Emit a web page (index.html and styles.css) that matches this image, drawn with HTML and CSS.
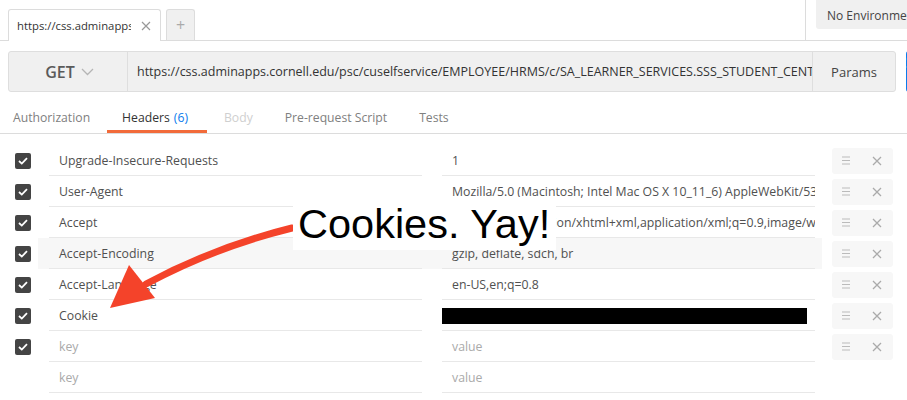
FILE: index.html
```html
<!DOCTYPE html>
<html>
<head>
<meta charset="utf-8">
<link rel="stylesheet" href="styles.css">
</head>
<body>
<div class="page">
  <div class="topbar">
    <div class="tabs">
      <div class="tab active">
        <span class="tab-title">https://css.adminapps.cornell.edu/psc</span>
        <svg class="tab-close" width="10" height="10" viewBox="0 0 10 10"><path d="M1 1L9 9M9 1L1 9" stroke="#999" stroke-width="1.2"/></svg>
      </div>
      <div class="tab plus">+</div>
    </div>
    <div class="env-area">
      <div class="env">No Environment</div>
    </div>
  </div>

  <div class="request">
    <div class="urlbar">
      <div class="method">GET <svg width="13" height="8" viewBox="0 0 13 8"><path d="M1 1L6.5 6.5L12 1" fill="none" stroke="#b5b5b5" stroke-width="1.3"/></svg></div>
      <div class="url">https://css.adminapps.cornell.edu/psc/cuselfservice/EMPLOYEE/HRMS/c/SA_LEARNER_SERVICES.SSS_STUDENT_CENTER.GBL</div>
      <div class="params">Params</div>
    </div>
    <div class="send">Send</div>
  </div>

  <div class="subtabs">
    <div class="subtab first">Authorization</div>
    <div class="subtab current">Headers <span class="count">(6)</span></div>
    <div class="subtab disabled">Body</div>
    <div class="subtab">Pre-request Script</div>
    <div class="subtab">Tests</div>
  </div>

  <div class="headers">
    <div class="row">
      <span class="check"><svg width="10" height="8" viewBox="0 0 10 8"><path d="M1 4L3.8 6.6L9 1.2" fill="none" stroke="#fff" stroke-width="1.8"/></svg></span>
      <div class="main"><div class="cell">Upgrade-Insecure-Requests</div><div class="cell">1</div></div>
      <div class="actions"><svg width="8" height="9" viewBox="0 0 8 9"><path d="M0 1H8M0 4.5H8M0 8H8" stroke="#bbb" stroke-width="1"/></svg><svg width="10" height="10" viewBox="0 0 10 10"><path d="M1 1L9 9M9 1L1 9" stroke="#aaa" stroke-width="1.3"/></svg></div>
    </div>
    <div class="row">
      <span class="check"><svg width="10" height="8" viewBox="0 0 10 8"><path d="M1 4L3.8 6.6L9 1.2" fill="none" stroke="#fff" stroke-width="1.8"/></svg></span>
      <div class="main"><div class="cell">User-Agent</div><div class="cell">Mozilla/5.0 (Macintosh; Intel Mac OS X 10_11_6) AppleWebKit/537.36 (KHTML, like Gecko) Chrome/55.0.2883.95 Safari/537.36</div></div>
      <div class="actions"><svg width="8" height="9" viewBox="0 0 8 9"><path d="M0 1H8M0 4.5H8M0 8H8" stroke="#bbb" stroke-width="1"/></svg><svg width="10" height="10" viewBox="0 0 10 10"><path d="M1 1L9 9M9 1L1 9" stroke="#aaa" stroke-width="1.3"/></svg></div>
    </div>
    <div class="row">
      <span class="check"><svg width="10" height="8" viewBox="0 0 10 8"><path d="M1 4L3.8 6.6L9 1.2" fill="none" stroke="#fff" stroke-width="1.8"/></svg></span>
      <div class="main"><div class="cell">Accept</div><div class="cell">text/html,application/xhtml+xml,application/xml;q=0.9,image/webp,*/*;q=0.8</div></div>
      <div class="actions"><svg width="8" height="9" viewBox="0 0 8 9"><path d="M0 1H8M0 4.5H8M0 8H8" stroke="#bbb" stroke-width="1"/></svg><svg width="10" height="10" viewBox="0 0 10 10"><path d="M1 1L9 9M9 1L1 9" stroke="#aaa" stroke-width="1.3"/></svg></div>
    </div>
    <div class="row">
      <span class="check"><svg width="10" height="8" viewBox="0 0 10 8"><path d="M1 4L3.8 6.6L9 1.2" fill="none" stroke="#fff" stroke-width="1.8"/></svg></span>
      <div class="main hover"><div class="cell">Accept-Encoding</div><div class="cell">gzip, deflate, sdch, br</div></div>
      <div class="actions"><svg width="8" height="9" viewBox="0 0 8 9"><path d="M0 1H8M0 4.5H8M0 8H8" stroke="#bbb" stroke-width="1"/></svg><svg width="10" height="10" viewBox="0 0 10 10"><path d="M1 1L9 9M9 1L1 9" stroke="#aaa" stroke-width="1.3"/></svg></div>
    </div>
    <div class="row">
      <span class="check"><svg width="10" height="8" viewBox="0 0 10 8"><path d="M1 4L3.8 6.6L9 1.2" fill="none" stroke="#fff" stroke-width="1.8"/></svg></span>
      <div class="main"><div class="cell">Accept-Language</div><div class="cell">en-US,en;q=0.8</div></div>
      <div class="actions"><svg width="8" height="9" viewBox="0 0 8 9"><path d="M0 1H8M0 4.5H8M0 8H8" stroke="#bbb" stroke-width="1"/></svg><svg width="10" height="10" viewBox="0 0 10 10"><path d="M1 1L9 9M9 1L1 9" stroke="#aaa" stroke-width="1.3"/></svg></div>
    </div>
    <div class="row">
      <span class="check"><svg width="10" height="8" viewBox="0 0 10 8"><path d="M1 4L3.8 6.6L9 1.2" fill="none" stroke="#fff" stroke-width="1.8"/></svg></span>
      <div class="main"><div class="cell">Cookie</div><div class="cell redacted-cell"><span class="redacted"></span></div></div>
      <div class="actions"><svg width="8" height="9" viewBox="0 0 8 9"><path d="M0 1H8M0 4.5H8M0 8H8" stroke="#bbb" stroke-width="1"/></svg><svg width="10" height="10" viewBox="0 0 10 10"><path d="M1 1L9 9M9 1L1 9" stroke="#aaa" stroke-width="1.3"/></svg></div>
    </div>
    <div class="row">
      <span class="check"><svg width="10" height="8" viewBox="0 0 10 8"><path d="M1 4L3.8 6.6L9 1.2" fill="none" stroke="#fff" stroke-width="1.8"/></svg></span>
      <div class="main"><div class="cell placeholder">key</div><div class="cell placeholder">value</div></div>
      <div class="actions"><svg width="8" height="9" viewBox="0 0 8 9"><path d="M0 1H8M0 4.5H8M0 8H8" stroke="#bbb" stroke-width="1"/></svg><svg width="10" height="10" viewBox="0 0 10 10"><path d="M1 1L9 9M9 1L1 9" stroke="#aaa" stroke-width="1.3"/></svg></div>
    </div>
    <div class="row">
      <span class="check blank"></span>
      <div class="main"><div class="cell placeholder">key</div><div class="cell placeholder">value</div></div>
    </div>
  </div>

  <svg class="arrow" width="907" height="400" viewBox="0 0 907 400">
    <path d="M292 228 Q 215 247 146 284" fill="none" stroke="#f4432a" stroke-width="7" stroke-linecap="round"/>
    <path d="M110 308 L129 265 L155 298 Z" fill="#f4432a"/>
  </svg>
  <div class="callout">Cookies. Yay!</div>
</div>
</body>
</html>
```
FILE: styles.css
```css
* { box-sizing: border-box; }
html, body { margin: 0; padding: 0; }
body {
  width: 907px;
  height: 400px;
  overflow: hidden;
  background: #fff;
  font-family: "Open Sans", "Liberation Sans", sans-serif;
  color: #505050;
}
.page { position: relative; width: 907px; height: 400px; overflow: hidden; }

.topbar {
  height: 41px;
  display: flex;
  justify-content: space-between;
  border-bottom: 1px solid #dcdcdc;
}
.tabs { display: flex; align-items: flex-end; padding-left: 8px; gap: 5px; }
.tab {
  height: 32px;
  margin-bottom: -1px;
  border: 1px solid #dcdcdc;
  border-bottom: none;
  border-radius: 3px 3px 0 0;
  display: flex;
  align-items: center;
}
.tab.active {
  width: 153px;
  background: #fff;
  padding: 0 9px 0 8px;
  font-size: 11.3px;
  color: #333;
  gap: 10px;
}
.tab-title { flex: 1; overflow: hidden; white-space: nowrap; }
.tab.plus {
  width: 29px;
  height: 31px;
  margin-bottom: 0;
  background: #f0f0f0;
  justify-content: center;
  color: #aaa;
  font-size: 16px;
}
.env-area {
  width: 102px;
  border-left: 1px solid #dcdcdc;
  padding-left: 10px;
}
.env {
  height: 29px;
  background: #f0f0f0;
  border-radius: 0 0 0 3px;
  font-size: 12px;
  color: #444;
  padding: 7px 0 0 11px;
  white-space: nowrap;
  overflow: hidden;
}

.request { display: flex; padding: 10px 0 0 8px; gap: 10px; }
.urlbar {
  width: 888px;
  height: 41px;
  flex-shrink: 0;
  display: flex;
  background: #f0f0f0;
  border: 1px solid #dedede;
  border-radius: 3px;
  font-size: 12.5px;
  color: #333;
}
.method {
  width: 119px;
  flex-shrink: 0;
  border-right: 1px solid #dedede;
  display: flex;
  align-items: center;
  justify-content: center;
  gap: 6px;
  font-size: 16px;
  font-weight: 600;
  color: #5a5a5a;
  padding-left: 3px;
}
.url {
  flex: 1;
  padding: 0 0 0 9px;
  display: flex;
  align-items: center;
  overflow: hidden;
  white-space: nowrap;
}
.params {
  width: 83px;
  flex-shrink: 0;
  border-left: 1px solid #dedede;
  display: flex;
  align-items: center;
  justify-content: center;
  color: #444;
  font-size: 13px;
}
.send {
  width: 90px;
  flex-shrink: 0;
  height: 41px;
  background: #097bed;
  border-radius: 3px;
  color: #fff;
}

.subtabs {
  display: flex;
  height: 42px;
  padding-top: 8px;
  border-bottom: 1px solid #dcdcdc;
  font-size: 12.2px;
  color: #808080;
}
.subtab {
  padding: 0 16px;
  display: flex;
  align-items: center;
  border-bottom: 3px solid transparent;
  padding-top: 4px;
}
.subtab.first { padding-left: 13px; padding-right: 17px; }
.subtab.current { color: #333; border-bottom-color: #f26b3a; gap: 4px; padding-left: 15px; padding-right: 19px; }
.subtab.disabled { color: #cfcfcf; padding-left: 17px; }
.count { color: #097bed; }

.headers { padding-top: 11px; }
.row { display: flex; align-items: center; height: 31px; }
.check {
  width: 16px;
  height: 16px;
  margin-left: 15px;
  margin-right: 7px;
  background: #444;
  border-radius: 2px;
  display: flex;
  align-items: center;
  justify-content: center;
  flex-shrink: 0;
}
.check.blank { background: transparent; }
.main {
  display: flex;
  gap: 20px;
  height: 31px;
  padding: 0 7px 0 11px;
  width: 784px;
  flex-shrink: 0;
}
.main.hover { background: #f7f7f7; }
.cell {
  width: 373px;
  height: 31px;
  border-bottom: 1px solid #e8e8e8;
  padding: 1px 3px 0 10px;
  display: flex;
  align-items: center;
  font-size: 12.3px;
  color: #505050;
  white-space: nowrap;
  overflow: hidden;
}
.cell.placeholder { color: #aaa; }
.redacted-cell { padding-left: 0; }
.redacted { display: block; width: 366px; height: 16px; background: #000; margin-left: -1px; }
.actions {
  margin-left: 10px;
  width: 61px;
  height: 26px;
  background: #f7f7f7;
  border-radius: 3px;
  display: flex;
  align-items: center;
  justify-content: space-between;
  padding: 0 11px 0 10px;
  flex-shrink: 0;
}

.arrow { position: absolute; left: 0; top: 0; pointer-events: none; }
.callout {
  position: absolute;
  left: 293px;
  top: 197px;
  width: 263px;
  height: 53px;
  background: #fff;
  font-family: "Liberation Sans", Arial, sans-serif;
  font-size: 41.5px;
  color: #000;
  padding: 4px 0 0 5px;
  line-height: 46px;
  white-space: nowrap;
}
```
